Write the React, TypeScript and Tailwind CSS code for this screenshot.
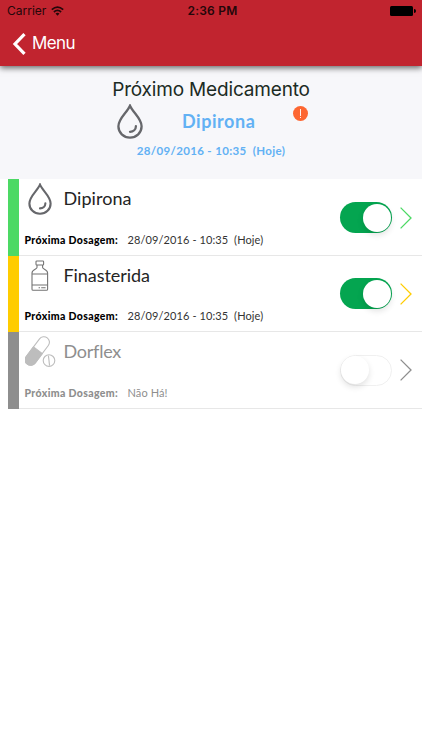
import React from 'react';

function DropIcon({ className }: { className: string }) {
  return (
    <svg viewBox="0 0 26 35" fill="none" stroke="#66676b" strokeWidth="2.3" className={className}>
      <path d="M13 1.8C10.3 8.3 1.4 14.5 1.4 22.3C1.4 28.8 6.5 33.6 13 33.6S24.6 28.8 24.6 22.3C24.6 14.5 15.7 8.3 13 1.8Z" />
      <path d="M18.9 22.2C18.9 25.4 16.3 27.7 13 27.8" strokeLinecap="round" />
    </svg>
  );
}

function BottleIcon() {
  return (
    <svg viewBox="0 0 18 32" fill="none" stroke="#737373" strokeWidth="1.1" className="ml-[6px] h-[32px] w-[18px]">
      <rect x="5" y="1" width="7.6" height="4" rx="0.8" />
      <path d="M6 5V7.6C6 9.4 1 9.4 1 13V29.2Q1 30.3 2.1 30.3H15.5Q16.6 30.3 16.6 29.2V13C16.6 9.4 11.6 9.4 11.6 7.6V5" />
      <path d="M1 14H16.6M1 25H16.6" />
      <path d="M7.6 27.8H9M10.2 27.8H14.6" />
    </svg>
  );
}

function PillsIcon() {
  return (
    <svg viewBox="0 0 32 32" fill="none" stroke="#bdbdbd" strokeWidth="1.1" className="h-[32px] w-[32px]">
      <g transform="rotate(37 12.3 15)">
        <rect x="6.8" y="-1.5" width="11" height="33" rx="5.5" />
        <path d="M6.8 14H17.8V26A5.5 5.5 0 0 1 6.8 26Z" fill="#bdbdbd" />
      </g>
      <circle cx="24" cy="24.6" r="7.4" fill="white" stroke="none" />
      <circle cx="24" cy="24.6" r="5.8" />
      <path d="M23.4 19.6L24.6 29.6" />
    </svg>
  );
}

function Toggle({ on }: { on: boolean }) {
  return (
    <div
      className={`mt-[1px] flex h-[31px] w-[52px] shrink-0 items-center rounded-full ${
        on ? 'justify-end bg-[#04a550] px-[1.5px]' : 'justify-start border-[1.5px] border-[#f0f0f0] bg-white'
      }`}
    >
      <div className="size-[28px] rounded-full bg-white shadow-[0_3px_6px_rgba(0,0,0,0.12)]" />
    </div>
  );
}

const medicines = [
  {
    name: 'Dipirona',
    nameStyle: 'text-[#242424] tracking-[0.05px]',
    next: '28/09/2016 - 10:35  (Hoje)',
    bar: 'bg-[#4cd964]',
    arrow: '#4cd964',
    icon: <DropIcon className="ml-[3px] h-[32px] w-[24px]" />,
    on: true,
  },
  {
    name: 'Finasterida',
    nameStyle: 'text-[#242424] tracking-[-0.05px]',
    next: '28/09/2016 - 10:35  (Hoje)',
    bar: 'bg-[#ffcc00]',
    arrow: '#ffcc00',
    icon: <BottleIcon />,
    on: true,
  },
  {
    name: 'Dorflex',
    nameStyle: 'text-[#8e8e8e] tracking-[-0.25px]',
    next: 'Não Há!',
    bar: 'bg-[#8e8e8e]',
    arrow: '#8e8e8e',
    icon: <PillsIcon />,
    on: false,
  },
];

export default function App() {
  return (
    <div className="flex h-[750px] w-[422px] flex-col overflow-hidden bg-white font-['Lato','Liberation_Sans',sans-serif]">
      {/* Status bar and navigation */}
      <header className="z-10 h-[66px] shrink-0 bg-[#c1242f] shadow-[0_2px_6px_rgba(0,0,0,0.6)]">
        <div className="grid h-[22px] grid-cols-3 items-center pr-[6px] pl-[7px] font-['Inter',sans-serif] text-[12px] text-[#24070a]">
          <div className="flex items-center gap-[5px]">
            <span>Carrier</span>
            <svg viewBox="0 0 13 10" fill="none" stroke="#24070a" strokeWidth="1.7" className="h-[10px] w-[13px]">
              <path d="M.8 3.7Q6.5-1.5 12.2 3.7M2.9 6Q6.5 2.8 10.1 6" />
              <path d="M4.5 7.5Q6.5 5.8 8.5 7.5L6.5 9.7Z" fill="#24070a" stroke="none" />
            </svg>
          </div>
          <span className="pl-[2px] text-center font-semibold tracking-[0.2px] whitespace-nowrap">2:36 PM</span>
          <div className="flex items-center justify-end gap-px">
            <div className="h-[10px] w-[23px] rounded-[1.5px] bg-black" />
            <div className="h-[4px] w-[1.5px] rounded-r-full bg-black" />
          </div>
        </div>
        <div className="flex h-[43px] items-center gap-[6px] pl-[12px] text-white">
          <svg viewBox="0 0 14 22" fill="none" stroke="currentColor" strokeWidth="3.2" className="h-[22px] w-[14px]">
            <path d="M12.5 1.2L3 11L12.5 20.8" />
          </svg>
          <span className="font-['Inter',sans-serif] text-[17px] tracking-[-0.6px]">Menu</span>
        </div>
      </header>

      {/* Next medicine */}
      <section className="flex h-[113.4px] shrink-0 flex-col bg-[#f7f7fa] pt-[12px]">
        <h1 className="text-center font-['Inter',sans-serif] text-[19px] leading-[24px] tracking-[-0.17px] text-[#1c2b24]">
          Próximo Medicamento
        </h1>
        <div className="flex h-[40px] items-start pl-[117px]">
          <DropIcon className="mt-[2px] h-[35px] w-[26px]" />
          <span className="mt-[7px] ml-[39px] w-[111px] text-[18px] leading-[24px] font-bold tracking-[0.55px] text-[#62b1f4]">
            Dipirona
          </span>
          <div className="mt-[4px] flex size-[15px] items-center justify-center rounded-full bg-[#fd6631]">
            <div className="flex flex-col gap-px">
              <div className="h-[7px] w-px bg-white/90" />
              <div className="size-px bg-white/90" />
            </div>
          </div>
        </div>
        <p className="text-center text-[11.5px] leading-[18px] font-bold tracking-[0.35px] whitespace-pre text-[#62b1f4]">
          {'28/09/2016 - 10:35  (Hoje)'}
        </p>
      </section>

      {/* Medicine list */}
      <ul className="pl-[8px]">
        {medicines.map((m) => (
          <li key={m.name} className="flex h-[76.4px]">
            <div className={`w-[10.5px] shrink-0 ${m.bar}`} />
            <div className="flex flex-1 items-center border-b border-[#e7e7e7] pr-[10px] pl-[6px]">
              <div className="h-full flex-1">
                <div className="flex h-[51.5px] items-start pt-[4px]">
                  <div className="w-[39px] shrink-0">{m.icon}</div>
                  <span className={`mt-[2.8px] text-[18px] leading-[24px] ${m.nameStyle}`}>{m.name}</span>
                </div>
                <div className="flex text-[11px] leading-[18px] whitespace-pre">
                  <span className={`w-[103px] text-[10.5px] font-black tracking-[0.35px] ${m.on ? 'text-black' : 'text-[#8e8e8e]'}`}>
                    Próxima Dosagem:
                  </span>
                  <span className={`tracking-[0.1px] ${m.on ? 'text-[#333]' : 'text-[#8e8e8e]'}`}>{m.next}</span>
                </div>
              </div>
              <Toggle on={m.on} />
              <svg viewBox="0 0 12 22" fill="none" stroke={m.arrow} strokeWidth="1.3" className="mt-[1px] ml-[8px] h-[22px] w-[12px]">
                <path d="M.6.6L11 11L.6 21.4" />
              </svg>
            </div>
          </li>
        ))}
      </ul>
    </div>
  );
}
